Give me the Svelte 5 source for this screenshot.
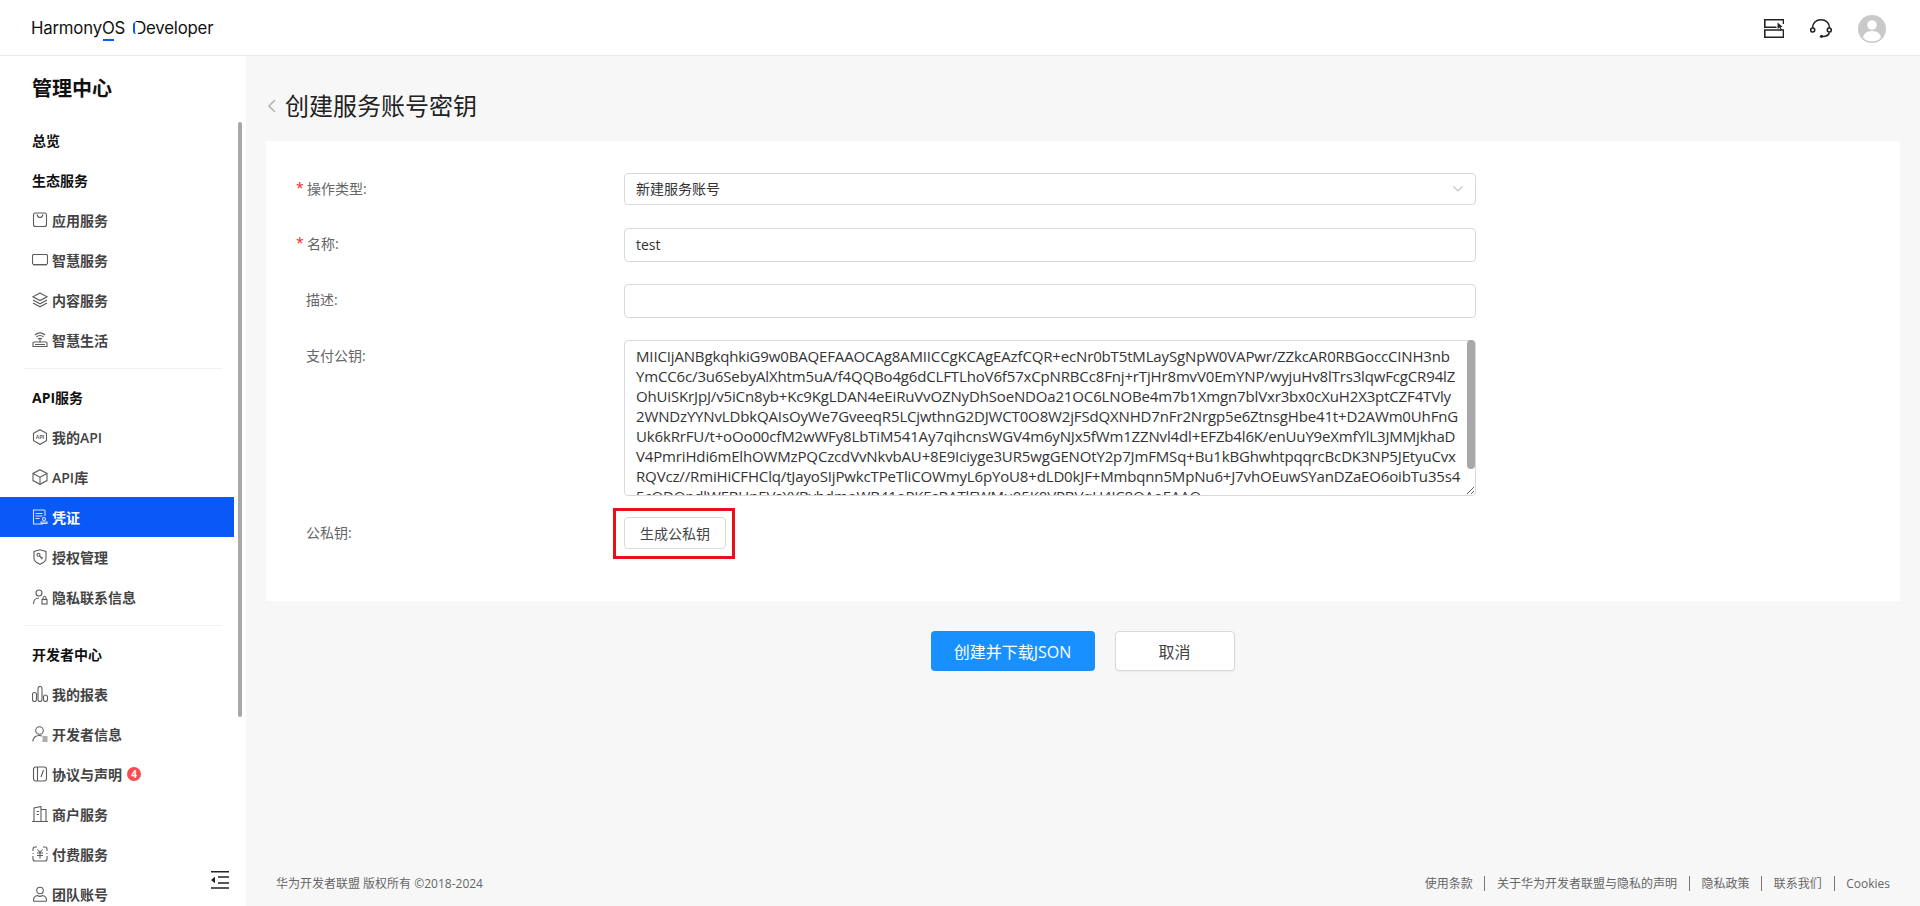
<script>
  const keyText = [
    'MIICIjANBgkqhkiG9w0BAQEFAAOCAg8AMIICCgKCAgEAzfCQR+ecNr0bT5tMLaySgNpW0VAPwr/ZZkcAR0RBGoccCINH3nb',
    'YmCC6c/3u6SebyAlXhtm5uA/f4QQBo4g6dCLFTLhoV6f57xCpNRBCc8Fnj+rTjHr8mvV0EmYNP/wyjuHv8lTrs3lqwFcgCR94lZ',
    'OhUiSKrJpJ/v5iCn8yb+Kc9KgLDAN4eEiRuVvOZNyDhSoeNDOa21OC6LNOBe4m7b1Xmgn7blVxr3bx0cXuH2X3ptCZF4TVly',
    '2WNDzYYNvLDbkQAIsOyWe7GveeqR5LCjwthnG2DJWCT0O8W2jFSdQXNHD7nFr2Nrgp5e6ZtnsgHbe41t+D2AWm0UhFnG',
    'Uk6kRrFU/t+oOo00cfM2wWFy8LbTiM541Ay7qihcnsWGV4m6yNJx5fWm1ZZNvl4dl+EFZb4l6K/enUuY9eXmfYlL3JMMjkhaD',
    'V4PmriHdi6mElhOWMzPQCzcdVvNkvbAU+8E9Iciyge3UR5wgGENOtY2p7JmFMSq+Bu1kBGhwhtpqqrcBcDK3NP5JEtyuCvx',
    'RQVcz//RmiHiCFHClq/tJayoSIjPwkcTPeTliCOWmyL6pYoU8+dLD0kJF+Mmbqnn5MpNu6+J7vhOEuwSYanDZaEO6oibTu35s4',
    '5cQDQndlWEBUnEVsXYBvhdmoWB41oPKEsBATlFWMu05K0VPBVqU4JC8QAoEAAQ==',
    ''
  ].join('\n');

  const menu = [
    { title: '总览' },
    { title: '生态服务' },
    { name: '应用服务', icon: 'bag' },
    { name: '智慧服务', icon: 'screen' },
    { name: '内容服务', icon: 'layers' },
    { name: '智慧生活', icon: 'router' },
    { divider: true },
    { title: 'API服务' },
    { name: '我的API', icon: 'hexapi' },
    { name: 'API库', icon: 'cube' },
    { name: '凭证', icon: 'cert', active: true },
    { name: '授权管理', icon: 'shield' },
    { name: '隐私联系信息', icon: 'contact' },
    { divider: true },
    { title: '开发者中心' },
    { name: '我的报表', icon: 'bars' },
    { name: '开发者信息', icon: 'devinfo' },
    { name: '协议与声明', icon: 'book', badge: 4 },
    { name: '商户服务', icon: 'building' },
    { name: '付费服务', icon: 'pay' },
    { name: '团队账号', icon: 'team' }
  ];

  const links = ['使用条款', '关于华为开发者联盟与隐私的声明', '隐私政策', '联系我们', 'Cookies'];
</script>

<header class="topbar">
  <div class="logo">
    <span class="harmony">Harmony<span class="os">O</span>S</span>
    <span class="dev"><span class="d">D</span>eveloper</span>
  </div>
  <div class="tools">
    <svg width="20" height="19" viewBox="0 0 20 19" fill="none" stroke="#222" stroke-width="1.6">
      <path d="M19.500 5V.8H.8V8.200H12.500" />
      <path d="M.8 11h18.700v7.200H.8z" />
      <path d="M13.500 3.500l5.200 4.300-2.200.3 1.300 2.600-1.100.5-1.200-2.600-1.900 1.500z" fill="#222" stroke="none" />
    </svg>
    <svg width="22" height="19" viewBox="0 0 22 19" fill="none" stroke="#222" stroke-width="1.6">
      <path d="M2.500 9C2.500 4 6 .8 11 .8S19.500 4 19.500 9" />
      <circle cx="2.700" cy="11" r="2" />
      <circle cx="19.300" cy="11" r="2" />
      <path d="M19.300 13.500c-.5 2.600-3 4-6.800 4" />
      <circle cx="11.500" cy="17.300" r="1.600" fill="#222" stroke="none" />
    </svg>
    <div class="avatar">
      <svg width="28" height="28" viewBox="0 0 28 28" fill="#fff">
        <circle cx="14" cy="10" r="4.800" />
        <path d="M5 22.500c1-4.500 4.500-6.500 9-6.500s8 2 9 6.500c-2.200 2.600-5.400 4-9 4s-6.800-1.400-9-4z" />
      </svg>
    </div>
  </div>
</header>

<div class="layout">
  <aside class="sidebar">
    <h2>管理中心</h2>
    <nav>
      {#each menu as item}
        {#if item.divider}
          <div class="divider"></div>
        {:else if item.title}
          <div class="group">{item.title}</div>
        {:else}
          <div class="item" class:active={item.active}>
            <svg class="ico" width="16" height="16" viewBox="0 0 16 16" fill="none" stroke="currentColor" stroke-width="1.100">
              {#if item.icon === 'bag'}
                <rect x="1.500" y="1" width="13" height="13.500" rx="2" />
                <path d="M5 2.500c.5 2 1.500 3 3 3s2.500-1 3-3" />
              {:else if item.icon === 'screen'}
                <rect x="0.500" y="2.500" width="15" height="10" rx="1.500" />
                <path d="M1 12.700h14" stroke-width="1.400" />
              {:else if item.icon === 'layers'}
                <path d="M8 1l7 3.800-7 3.800-7-3.800z" />
                <path d="M1 8l7 3.800L15 8" />
                <path d="M1 11l7 3.800 7-3.800" />
              {:else if item.icon === 'router'}
                <path d="M2 10h12a1 1 0 0 1 1 1v3.500H1V11a1 1 0 0 1 1-1z" />
                <path d="M8 10V6M6 7c1-1 3-1 4 0M4.500 5c2-2 5-2 7 0M3 3c3-2.600 7-2.600 10 0M3 12.500h10" />
              {:else if item.icon === 'hexapi'}
                <path d="M8 .7l6.500 3.600v7.400L8 15.300l-6.500-3.600V4.300z" />
                <text x="8" y="10" text-anchor="middle" font-size="5" font-weight="700" fill="currentColor" stroke="none" font-family="Liberation Sans, sans-serif">API</text>
              {:else if item.icon === 'cube'}
                <path d="M8 .7l7 3.700v7.200l-7 3.700-7-3.700V4.400z" />
                <path d="M1 4.400l7 3.800 7-3.800M8 8.200v7" />
              {:else if item.icon === 'cert'}
                <path d="M11 15H1.500V1h10.500a1 1 0 0 1 1 1v5" />
                <path d="M3.500 4.500h7M3.500 7h7M3.500 9.500h4" />
                <circle cx="12" cy="10" r="1.500" />
                <path d="M9 14.500h6v-1.500H9z" />
              {:else if item.icon === 'shield'}
                <path d="M2 2.500L8 .8l6 1.700v7c0 2.500-3 4.500-6 5.800-3-1.300-6-3.300-6-5.800z" />
                <circle cx="6.500" cy="5.800" r="1.500" />
                <path d="M7.500 7l3 3M9.500 9l1-1" />
              {:else if item.icon === 'contact'}
                <circle cx="7" cy="4" r="3" />
                <path d="M1.500 15c0-4 2.500-6 5.500-6" />
                <rect x="10" y="10.500" width="5" height="4.500" />
                <path d="M11 10.500V9a1.500 1.500 0 0 1 3 0v1.500" />
              {:else if item.icon === 'bars'}
                <rect x="0.500" y="6.500" width="4" height="9" rx="2" />
                <rect x="6" y="0.500" width="4" height="15" rx="2" />
                <rect x="11.500" y="9" width="4" height="6.500" rx="2" />
              {:else if item.icon === 'devinfo'}
                <circle cx="7.500" cy="4.500" r="3.800" />
                <path d="M.8 15.500c.4-3.800 3-6 6.700-6 1 0 1.800.1 2.500.4" />
                <path d="M10.500 11h5M10.500 13h5M10.500 15h5" />
              {:else if item.icon === 'book'}
                <rect x="1.500" y="1" width="13" height="14" rx="2.500" />
                <path d="M5.500 1v14M11.500 4l-2.500 7" />
              {:else if item.icon === 'building'}
                <path d="M0 15.500h16M2 15V2l7-1.500V15M9 3.500h5V15M4.500 5.500h2.500M4.500 8.500h2.500" />
              {:else if item.icon === 'pay'}
                <path d="M5 1H3a2 2 0 0 0-2 2v2M11 1h2a2 2 0 0 1 2 2v2M1 10v3a2 2 0 0 0 2 2h10a2 2 0 0 0 2-2v-3" />
                <path d="M5.500 3.500L8 6.500l2.500-3M5 7h6M5 9.500h6M8 6.500v6" />
                <path d="M.5 7.500h1M14.500 7.500h1" />
              {:else if item.icon === 'team'}
                <circle cx="8" cy="4.500" r="3.300" />
                <path d="M1.500 14.700c0-3.200 1.800-4.800 3.800-5.200 1.500 1 3.900 1 5.400 0 2 .4 3.800 2 3.800 5.200a.6.6 0 0 1-.6.6H2.100a.6.6 0 0 1-.6-.6z" />
              {/if}
            </svg>
            <span>{item.name}</span>
            {#if item.badge}<em class="badge">{item.badge}</em>{/if}
          </div>
        {/if}
      {/each}
    </nav>
    <div class="thumb"></div>
    <svg class="collapse" width="18" height="18" viewBox="0 0 18 18" fill="#222">
      <path d="M0 0h18v1.500H0zM0 16.300h18v1.500H0zM7 5.300h11v1.500H7zM7 11.200h11v1.500H7zM0 9l4-3.200v6.400z" />
    </svg>
  </aside>

  <main class="content">
    <div class="heading">
      <svg width="10" height="16" viewBox="0 0 10 16" fill="none" stroke="#b4b4b4" stroke-width="1.600">
        <path d="M8 2L2 8l6 6" />
      </svg>
      <h1>创建服务账号密钥</h1>
    </div>

    <section class="card">
      <div class="row first">
        <label class="req">操作类型:</label>
        <div class="field select">
          <span>新建服务账号</span>
          <svg width="12" height="8" viewBox="0 0 12 8" fill="none" stroke="#c4c4c4" stroke-width="1.100">
            <path d="M1.500 1.500L6 6l4.500-4.500" />
          </svg>
        </div>
      </div>
      <div class="row name">
        <label class="req">名称:</label>
        <div class="field">test</div>
      </div>
      <div class="row desc">
        <label>描述:</label>
        <div class="field"></div>
      </div>
      <div class="row key">
        <label>支付公钥:</label>
        <div class="area-wrap">
          <textarea class="area" readonly value={keyText} spellcheck="false"></textarea>
          <div class="area-thumb"></div>
        </div>
      </div>
      <div class="row gen">
        <label>公私钥:</label>
        <div class="mark">
          <button class="small">生成公私钥</button>
        </div>
      </div>
    </section>

    <div class="actions">
      <button class="primary">创建并下载JSON</button>
      <button class="ghost">取消</button>
    </div>

    <footer class="foot">
      <span>华为开发者联盟 版权所有 ©2018-2024</span>
      <div class="links">
        {#each links as link, i}
          {#if i > 0}<i></i>{/if}
          <a href="#top">{link}</a>
        {/each}
      </div>
    </footer>
  </main>
</div>

<style>
  :global(body) {
    margin: 0;
    height: 906px;
    overflow: hidden;
    background: #f7f7f7;
    font-family: "Open Sans", "Noto Sans CJK SC", sans-serif;
    color: #333;
  }

  .topbar {
    height: 55px;
    background: #fff;
    border-bottom: 1px solid #e9e9e9;
    display: flex;
    align-items: center;
    justify-content: space-between;
    padding: 0 34px 0 31px;
  }

  .logo {
    display: flex;
    align-items: center;
    gap: 9px;
    font-family: Inter, sans-serif;
    font-size: 16.800px;
    font-weight: 400;
    color: #111;
    letter-spacing: -0.200px;
    padding-top: 1px;
  }

  .os {
    position: relative;
  }

  .os::after {
    content: '';
    position: absolute;
    left: 1px;
    right: 1px;
    bottom: -3px;
    height: 2px;
    background: #0a59f7;
  }

  .d {
    position: relative;
  }

  .d::before {
    content: '';
    position: absolute;
    left: -1px;
    top: 4px;
    width: 5px;
    height: 12px;
    box-sizing: border-box;
    border-left: 2px solid #0a59f7;
    border-radius: 3px 0 0 3px;
    background: #fff;
  }

  .tools {
    display: flex;
    align-items: center;
    gap: 26px;
    padding-top: 2px;
  }

  .avatar {
    width: 28px;
    height: 28px;
    border-radius: 50%;
    background: #c9c9c9;
    overflow: hidden;
  }

  .avatar svg {
    display: block;
  }

  .layout {
    display: flex;
    height: 850px;
  }

  .sidebar {
    width: 246px;
    flex: none;
    background: #fff;
    position: relative;
    overflow: hidden;
  }

  .sidebar h2 {
    margin: 0;
    padding: 19px 0 0 32px;
    font-size: 20px;
    line-height: 28px;
    font-weight: 700;
    color: #111;
  }

  nav {
    margin-top: 17px;
    font-size: 14px;
    width: 234px;
  }

  .group,
  .item {
    height: 40px;
    display: flex;
    align-items: center;
    padding-left: 32px;
    font-weight: 600;
    box-sizing: border-box;
  }

  .group {
    color: #111;
    font-weight: 700;
  }

  .item {
    color: #444;
    gap: 4px;
  }

  .item .ico {
    color: #5c5c5c;
    flex: none;
  }

  .item.active {
    background: #0a59f7;
    color: #fff;
  }

  .item.active .ico {
    color: #d6e3ff;
  }

  .divider {
    height: 1px;
    background: #f1f1f1;
    margin: 8px 0 8px 24px;
    width: 198px;
  }

  .badge {
    font-style: normal;
    width: 14px;
    height: 14px;
    line-height: 14px;
    border-radius: 50%;
    background: #fa4a4f;
    color: #fff;
    font-size: 10px;
    font-weight: 700;
    text-align: center;
    margin-left: 1px;
  }

  .thumb {
    position: absolute;
    left: 238px;
    top: 66px;
    width: 4px;
    height: 595px;
    border-radius: 2px;
    background: #a8a8a8;
  }

  .collapse {
    position: absolute;
    left: 211px;
    top: 815px;
  }

  .content {
    flex: 1;
    min-width: 0;
    padding: 0 20px;
    display: flex;
    flex-direction: column;
  }

  .heading {
    display: flex;
    align-items: center;
    gap: 9px;
    height: 85px;
    box-sizing: border-box;
    padding: 11px 0 0 1px;
  }

  .heading svg {
    margin-top: 4px;
  }

  h1 {
    margin: 0;
    font-size: 24px;
    font-weight: 400;
    color: #222;
    margin-left: -1px;
  }

  .card {
    background: #fff;
    height: 460px;
    box-sizing: border-box;
    padding-top: 32px;
  }

  .row {
    display: flex;
    align-items: flex-start;
  }

  .row.name {
    margin-top: 23px;
  }

  .row.desc {
    margin-top: 22px;
  }

  .row.key {
    margin-top: 22px;
  }

  .row.gen {
    margin-top: 12px;
    align-items: center;
  }

  label {
    width: 358px;
    flex: none;
    box-sizing: border-box;
    padding-left: 40px;
    font-size: 14px;
    line-height: 32px;
    color: #666;
    position: relative;
  }

  label.req {
    padding-left: 41px;
  }

  .req::before {
    content: '*';
    position: absolute;
    left: 30px;
    top: -1px;
    color: #f5222d;
  }

  .gen label {
    margin-top: -2px;
  }

  .field {
    width: 852px;
    height: 34px;
    box-sizing: border-box;
    border: 1px solid #d9d9d9;
    border-radius: 4px;
    padding: 0 11px;
    font-size: 14px;
    line-height: 32px;
    color: #333;
    background: #fff;
  }

  .select {
    height: 32px;
    line-height: 30px;
    display: flex;
    align-items: center;
    justify-content: space-between;
  }

  .area-wrap {
    position: relative;
    width: 852px;
    height: 156px;
  }

  .area {
    width: 852px;
    height: 156px;
    box-sizing: border-box;
    border: 1px solid #d9d9d9;
    border-radius: 4px;
    padding: 5px 11px 0;
    margin: 0;
    font-family: "Open Sans", sans-serif;
    font-size: 15px;
    line-height: 20px;
    color: #333;
    letter-spacing: -0.150px;
    white-space: pre;
    overflow: hidden;
    resize: vertical;
    outline: none;
    display: block;
  }

  /* scrollbars are not painted in the headless shot, so the thumb is drawn over it */
  .area-thumb {
    position: absolute;
    right: 1px;
    top: 0;
    width: 8px;
    height: 129px;
    border-radius: 4px;
    background: #a8a8a8;
  }

  .mark {
    margin-left: -11px;
    border: 3px solid #e8101a;
    padding: 6px 8px;
    width: 122px;
    height: 51px;
    box-sizing: border-box;
  }

  button {
    font-family: inherit;
    cursor: pointer;
  }

  .small {
    display: block;
    width: 102px;
    height: 32px;
    background: #fff;
    border: 1px solid #d9d9d9;
    border-radius: 4px;
    font-size: 14px;
    color: #444;
    padding: 0;
  }

  .actions {
    display: flex;
    justify-content: center;
    gap: 20px;
    margin-top: 30px;
    padding-right: 1px;
  }

  .primary,
  .ghost {
    height: 40px;
    border-radius: 4px;
    font-size: 16px;
    padding: 0;
  }

  .primary {
    width: 164px;
    background: #1890ff;
    border: none;
    color: #fff;
  }

  .ghost {
    width: 120px;
    background: #fff;
    border: 1px solid #d9d9d9;
    box-shadow: 0 1px 2px rgba(0, 0, 0, 0.06);
    color: #444;
  }

  .foot {
    margin-top: auto;
    height: 46px;
    display: flex;
    align-items: center;
    justify-content: space-between;
    font-size: 12px;
    color: #666;
    padding: 0 10px;
  }

  .links {
    display: flex;
    align-items: center;
    gap: 11.700px;
  }

  .links a {
    color: #666;
    text-decoration: none;
  }

  .links i {
    width: 1px;
    height: 15px;
    background: #777;
  }
</style>
